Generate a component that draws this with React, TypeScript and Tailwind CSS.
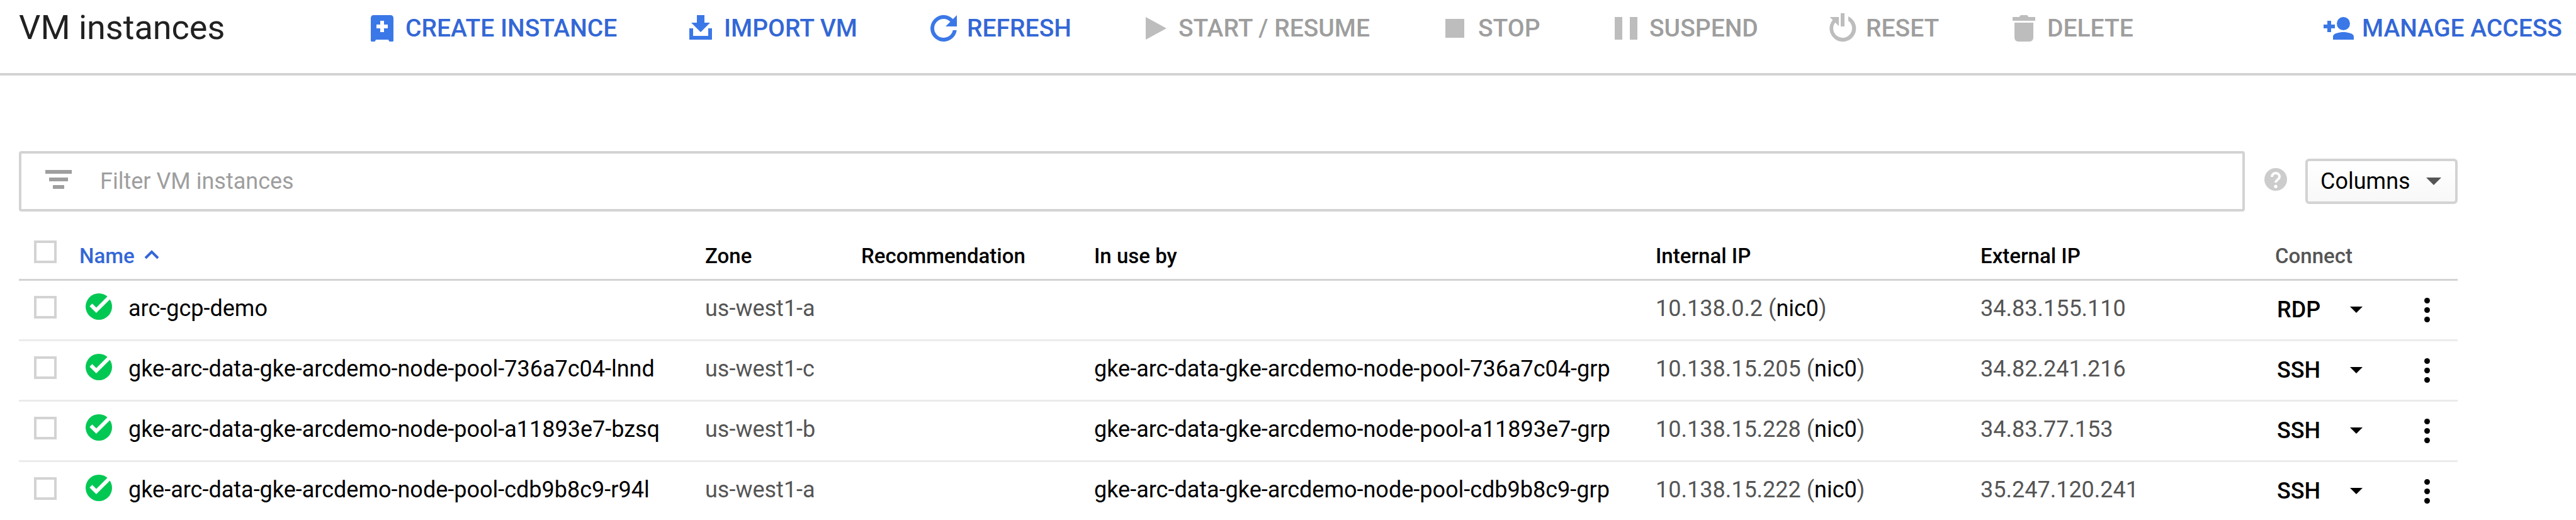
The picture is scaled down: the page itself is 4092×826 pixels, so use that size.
import type { ReactNode } from "react";

type Action = { label: string; enabled: boolean; icon: ReactNode };

const actions: Action[] = [
  {
    label: "CREATE INSTANCE",
    enabled: true,
    icon: (
      <path
        fillRule="evenodd"
        d="M4.5 2h9A1.5 1.5 0 0 1 15 3.5v12a.5.5 0 0 1-.5.5h-1.4a.5.5 0 0 1-.5-.4l-.3-.6H5.7l-.3.6a.5.5 0 0 1-.5.4H3.5a.5.5 0 0 1-.5-.5v-12A1.5 1.5 0 0 1 4.5 2zM8 5v2H6v2h2v2h2V9h2V7h-2V5z"
      />
    ),
  },
  {
    label: "IMPORT VM",
    enabled: true,
    icon: <path d="M7 2h4v4h3l-5 5-5-5h3zM3 9h2v4h8V9h2v6H3z" />,
  },
  {
    label: "REFRESH",
    enabled: true,
    icon: <path d="M9 4c1.4 0 2.6.6 3.5 1.5L10 8h6V2l-2.05 2.05A7 7 0 1 0 15.93 10H13.9A5 5 0 1 1 9 4z" />,
  },
  { label: "START / RESUME", enabled: false, icon: <path d="M4 3l11 6-11 6z" /> },
  { label: "STOP", enabled: false, icon: <path d="M4 4h10v10H4z" /> },
  { label: "SUSPEND", enabled: false, icon: <path d="M3 3h4v12H3zM11 3h4v12h-4z" /> },
  {
    label: "RESET",
    enabled: false,
    icon: <path d="M8 1h2v7H8zM2.2 3H7v4.8L5.1 5.9A5 5 0 1 0 12 5V2.67A7 7 0 1 1 3.75 4.55z" />,
  },
  {
    label: "DELETE",
    enabled: false,
    icon: <path d="M3 3h3.5l.8-1h3.4l.8 1H15v2H3zM4 6h10v8a2 2 0 0 1-2 2H6a2 2 0 0 1-2-2z" />,
  },
  {
    label: "MANAGE ACCESS",
    enabled: true,
    icon: (
      <>
        <circle cx="11.5" cy="6.5" r="3.5" />
        <path d="M6 15v-1.7C6 11.7 9.3 11 11.5 11s5.5.7 5.5 2.3V15zM3 5h2v2h2v2H5v2H3V9H1V7h2z" />
      </>
    ),
  },
];

type Instance = {
  name: string;
  zone: string;
  usedBy: string;
  internalIp: string;
  externalIp: string;
  connect: string;
};

const instances: Instance[] = [
  {
    name: "arc-gcp-demo",
    zone: "us-west1-a",
    usedBy: "",
    internalIp: "10.138.0.2",
    externalIp: "34.83.155.110",
    connect: "RDP",
  },
  {
    name: "gke-arc-data-gke-arcdemo-node-pool-736a7c04-lnnd",
    zone: "us-west1-c",
    usedBy: "gke-arc-data-gke-arcdemo-node-pool-736a7c04-grp",
    internalIp: "10.138.15.205",
    externalIp: "34.82.241.216",
    connect: "SSH",
  },
  {
    name: "gke-arc-data-gke-arcdemo-node-pool-a11893e7-bzsq",
    zone: "us-west1-b",
    usedBy: "gke-arc-data-gke-arcdemo-node-pool-a11893e7-grp",
    internalIp: "10.138.15.228",
    externalIp: "34.83.77.153",
    connect: "SSH",
  },
  {
    name: "gke-arc-data-gke-arcdemo-node-pool-cdb9b8c9-r94l",
    zone: "us-west1-a",
    usedBy: "gke-arc-data-gke-arcdemo-node-pool-cdb9b8c9-grp",
    internalIp: "10.138.15.222",
    externalIp: "35.247.120.241",
    connect: "SSH",
  },
];

const tableColumns = "grid grid-cols-[96px_994px_248px_370px_892px_516px_468px_290px]";

function Toolbar() {
  return (
    <header className="grid h-[120px] grid-cols-[550px_506px_386px_336px_476px_272px_344px_288px_500px_1fr] border-b-4 border-[#d3d3d3] pl-[30px]">
      <h1 className="flex h-[87px] items-center text-[54px] text-[#212121]">VM instances</h1>
      {actions.map((a) => (
        <button
          key={a.label}
          className={
            a.enabled
              ? "flex h-[90px] items-center gap-[10px] text-[39px] font-medium whitespace-nowrap text-[#3367d6]"
              : "flex h-[90px] items-center gap-[10px] text-[39px] font-medium whitespace-nowrap text-[#9e9e9e]"
          }
        >
          <svg viewBox="0 0 18 18" className={a.enabled ? "size-[54px] shrink-0 fill-[#3b78e7]" : "size-[54px] shrink-0 fill-[#bdbdbd]"}>
            {a.icon}
          </svg>
          {a.label}
        </button>
      ))}
    </header>
  );
}

function FilterBar() {
  return (
    <div className="mt-[120px] flex items-center">
      <div className="flex h-24 w-[3536px] items-center rounded-[4px] border-4 border-[#d3d3d3] pl-[38px] text-[36px] text-[#9e9e9e]">
        <svg viewBox="0 0 42 36" className="mr-[45px] h-9 w-[42px] fill-[#9e9e9e]">
          <path d="M0 0h42v6H0zM6 12h30v6H6zM12 24h18v6H12z" />
        </svg>
        Filter VM instances
      </div>
      <svg viewBox="0 0 36 36" className="mr-[29px] ml-[31px] size-9 -translate-y-[3px]">
        <circle cx="18" cy="18" r="18" fill="#ccc" />
        <path d="M12 14a6 6 0 0 1 12 0c0 4-6 4.5-6 9" fill="none" stroke="#fff" strokeWidth="4" />
        <circle cx="18" cy="29.3" r="2.7" fill="#fff" />
      </svg>
      <button className="flex h-[72px] w-[242px] items-center justify-between rounded-md border-4 border-[#d3d3d3] bg-linear-to-b from-white to-[#f8f8f8] pr-[22px] pl-5 text-[36px] text-black">
        Columns
        <svg viewBox="0 0 24 12" className="h-3 w-6 fill-[#555]">
          <path d="M0 0h24L12 12z" />
        </svg>
      </button>
    </div>
  );
}

function Checkbox() {
  return <span className="size-9 border-4 border-[#d3d3d3] bg-white" />;
}

function TableHead() {
  return (
    <div className={`${tableColumns} h-[110px] border-b-[3px] border-[#d3d3d3] text-[33px] font-medium text-black *:flex *:items-center *:pt-[34px]`}>
      <div className="pt-[21px]! pl-6">
        <Checkbox />
      </div>
      <div className="text-[#3367d6]">
        Name
        <svg viewBox="0 0 24 16" className="ml-[15px] h-4 w-6 -translate-y-[2px]">
          <path d="M2 13l10-10 10 10" fill="none" stroke="#3367d6" strokeWidth="4" />
        </svg>
      </div>
      <div>Zone</div>
      <div>Recommendation</div>
      <div>In use by</div>
      <div>Internal IP</div>
      <div>External IP</div>
      <div className="text-[#555]">Connect</div>
    </div>
  );
}

function InstanceRow({ item }: { item: Instance }) {
  return (
    <div className={`${tableColumns} h-24 border-b-[3px] border-[#ebebeb] text-[36px] text-[#555] *:flex *:items-center *:pb-[5px]`}>
      <div className="pb-[9px]! pl-6">
        <Checkbox />
      </div>
      <div className="text-black">
        <svg viewBox="0 0 18 18" className="mr-5 ml-1 size-[54px] -translate-y-[3px]">
          <circle cx="9" cy="9" r="7" fill="#00c853" />
          <path d="M4.8 8.1l2.85 2.85L16 2.6" fill="none" stroke="#fff" strokeWidth="2" />
        </svg>
        {item.name}
      </div>
      <div>{item.zone}</div>
      <div />
      <div className="text-black">{item.usedBy}</div>
      <div>
        <span className="whitespace-pre">
          {item.internalIp} (<span className="text-black">nic0</span>)
        </span>
      </div>
      <div>{item.externalIp}</div>
      <div className="pb-[1px]! pl-[3px] text-black">
        <span className="w-[116px] font-medium">{item.connect}</span>
        <svg viewBox="0 0 20 10" className="h-[10px] w-5">
          <path d="M0 0h20L10 10z" />
        </svg>
        <svg viewBox="0 0 9 39" className="ml-[98px] h-[39px] w-[9px]">
          <circle cx="4.5" cy="4.5" r="4.5" />
          <circle cx="4.5" cy="19.5" r="4.5" />
          <circle cx="4.5" cy="34.5" r="4.5" />
        </svg>
      </div>
    </div>
  );
}

export default function App() {
  return (
    <div className="h-[826px] w-[4092px] overflow-hidden bg-white font-['Roboto',sans-serif]">
      <Toolbar />
      <main className="w-[3904px] pl-[30px]">
        <FilterBar />
        <TableHead />
        {instances.map((item) => (
          <InstanceRow key={item.name} item={item} />
        ))}
      </main>
    </div>
  );
}
